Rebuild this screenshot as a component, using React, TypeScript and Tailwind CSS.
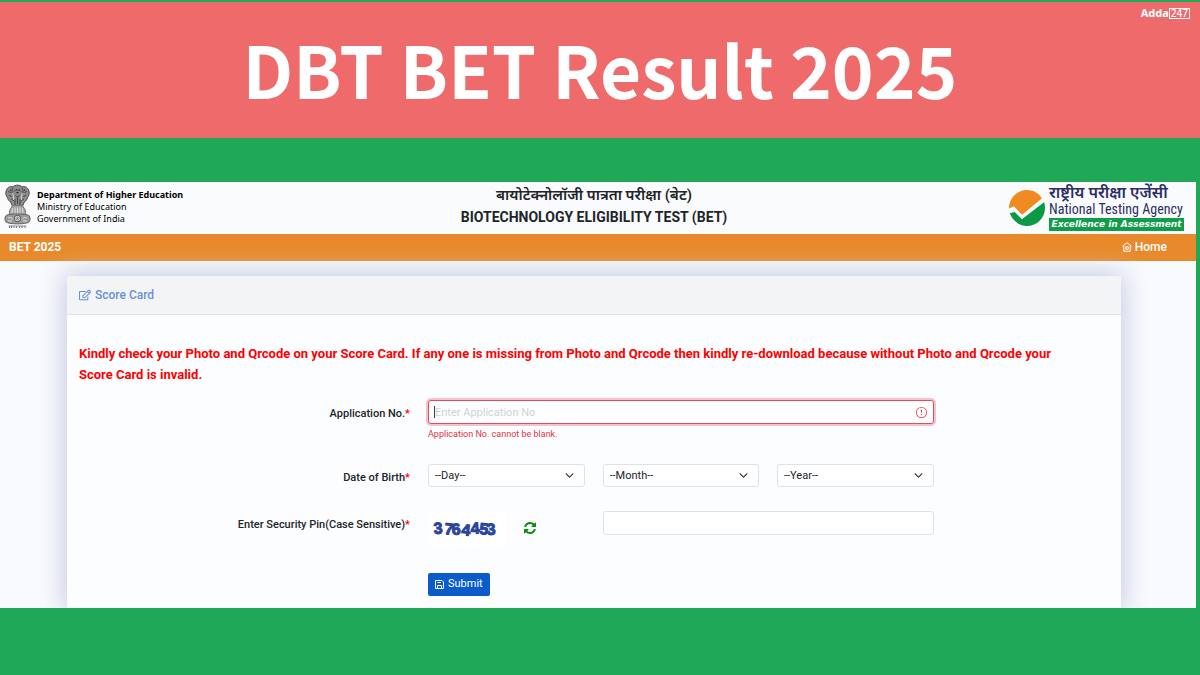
import React from 'react';
import { FaRegEdit } from 'react-icons/fa';
import { BsChevronDown, BsExclamationCircle } from 'react-icons/bs';

const Emblem: React.FC = () => (
  <svg viewBox="0 0 54 92" className="h-[46px] w-[27px] shrink-0" aria-label="Emblem of India">
    <path d="M5 12c2-6 8-8 13-6 4-5 14-5 18 0 5-2 11 0 13 6 3 6 1 11-2 15-1 5-4 8-7 10l-2 6H16l-2-6c-3-2-6-5-7-10C4 23 2 18 5 12z" fill="#8c8c8c" stroke="#4d4d4d" strokeWidth="2" />
    <path d="M18 8c-3 5-3 9 0 13M36 8c3 5 3 9 0 13M20 15c2-4 12-4 14 0M22 22c2 4 8 4 10 0M8 15l5 2M46 15l-5 2M10 23l5 2M44 23l-5 2M14 30l6 3M40 30l-6 3M27 26v14M22 30v12M32 30v12" stroke="#444" strokeWidth="2" fill="none" />
    <path d="M24 11h1M30 11h1M25 17h4M12 12h2M40 12h2" stroke="#222" strokeWidth="2.5" />
    <path d="M17 18c2 5 3 9 2 14M37 18c-2 5-3 9-2 14" stroke="#ddd" strokeWidth="2" fill="none" />
    <path d="M17 43h20l3 5c3 4 4 8 3 13H11c-1-5 0-9 3-13z" fill="#a3a3a3" stroke="#777" strokeWidth="2" />
    <path d="M17 48l-1 10M22 47v12M27 47v12M32 47v12M37 48l1 10" stroke="#e0e0e0" strokeWidth="2" />
    <path d="M4 63c6-4 40-4 46 0 3 4 3 9 0 13-6 5-40 5-46 0-3-4-3-9 0-13z" fill="#9a9a9a" stroke="#666" strokeWidth="2" />
    <circle cx="27" cy="69" r="6.500" fill="#ddd" stroke="#555" strokeWidth="2" />
    <path d="M27 63v12M21 69h12M23 65l8 8M31 65l-8 8" stroke="#777" />
    <path d="M8 68c4-2 8-1 10 3M46 68c-4-2-8-1-10 3M8 74h8M46 74h-8" stroke="#ddd" strokeWidth="2" fill="none" />
    <path d="M9 84h36" stroke="#666" strokeWidth="1.500" />
    <path d="M11 85v3M15 84v4M20 85v3M25 85v3M31 85v3M36 84v4M42 85v3" stroke="#666" strokeWidth="2" />
  </svg>
);

const NtaMark: React.FC = () => (
  <svg viewBox="0 0 36 36" className="h-9 w-9 shrink-0" aria-hidden="true">
    <path d="M0 18.500C0 8 8 0 18 0c7 0 12 3.500 15 8.500L13 25l-8-8.500z" fill="#f28a22" />
    <path d="M.5 22.500C3 30 10 36 18 36c10 0 18-8 18-18 0-2.500-.5-4.500-1-6L13 29 6 22z" fill="#0a9a45" />
    <path d="M0 19l5-2.500 8 8.500L33 8.500l2 3.500-22 17L6 22l-5.500 1z" fill="#fff" />
  </svg>
);

const HomeIcon: React.FC = () => (
  <svg viewBox="0 0 20 20" className="mb-0.5 h-[10px] w-[10px]" fill="none" stroke="currentColor" strokeWidth="2" aria-hidden="true">
    <path d="M1 8.500L10 1.500l9 7M3.500 8v10.500h13V8" />
    <path d="M7.500 9.500h5v5h-5z" />
  </svg>
);

const SaveIcon: React.FC = () => (
  <svg viewBox="0 0 18 18" className="h-[9px] w-[9px]" fill="none" stroke="currentColor" strokeWidth="2" aria-hidden="true">
    <path d="M1 1h13l3 3v13H1z" />
    <path d="M5 17v-6h8v6M5 5h7" />
  </svg>
);

const RefreshIcon: React.FC = () => (
  <svg viewBox="0 0 1536 1536" className="h-3 w-3" fill="currentColor" aria-hidden="true">
    <path d="M1511 928q0 5-1 7-64 268-268 434.500T764 1536q-146 0-282.500-55T238 1324l-129 129q-19 19-45 19t-45-19-19-45V960q0-26 19-45t45-19h448q26 0 45 19t19 45-19 45l-137 137q71 66 161 102t187 36q134 0 250-65t186-179q11-17 53-117 8-23 30-23h192q13 0 22.500 9.500t9.500 22.500zm25-800v448q0 26-19 45t-45 19h-448q-26 0-45-19t-19-45 19-45l138-138Q969 256 768 256q-134 0-250 65T332 500q-11 17-53 117-8 23-30 23H50q-13 0-22.500-9.500T18 608v-7q65-268 270-434.500T768 0q146 0 284 55.500T1297 212l130-129q19-19 45-19t45 19 19 45z" />
  </svg>
);

const Captcha: React.FC = () => (
  <svg viewBox="0 0 78 36" className="h-9 w-[78px] bg-white" role="img" aria-label="Security pin">
    <text
      x="6 16 24 33 43 51 59"
      y="23 23 24 24 23 23 24"
      rotate="-4 6 -4 6 -4 5 -4"
      className="fill-[#2b449c] stroke-[#2b449c] font-['Liberation_Sans'] text-[16px] font-bold"
    >
      3764453
    </text>
  </svg>
);

interface FieldLabelProps {
  htmlFor: string;
  children: React.ReactNode;
}

const FieldLabel: React.FC<FieldLabelProps> = ({ htmlFor, children }) => (
  <label htmlFor={htmlFor} className="col-span-4 px-[9px] pt-1.5 text-right text-[11px] leading-4 font-medium">
    {children}
    <span className="text-[#f00]">*</span>
  </label>
);

const DateSelect: React.FC<{ id: string; name: string }> = ({ id, name }) => (
  <div className="col-span-2 px-[9px]">
    <div className="relative">
      <select
        id={id}
        aria-label={name}
        className="block h-[23px] w-full appearance-none rounded-[3px] border border-[#dee2e6] bg-white px-1.5 text-[11px] leading-4"
      >
        <option>--{name}--</option>
      </select>
      <BsChevronDown className="pointer-events-none absolute top-[7px] right-[11px] h-[9px] w-[9px] stroke-1" />
    </div>
  </div>
);

const Header: React.FC = () => (
  <header>
    <div className="grid grid-cols-[1fr_auto_1fr] bg-[#fafbfd]">
      <div className="flex gap-1.5 px-1 pt-0.5 pb-1">
        <Emblem />
        <p className="pt-[5px] font-['Noto_Sans'] text-[9px] leading-[12px] text-black">
          <b>Department of Higher Education</b>
          <br />
          Ministry of Education
          <br />
          Government of India
        </p>
      </div>
      <div className="pt-0.5 pr-2 text-center leading-[22px]">
        <p lang="hi" className="text-[15px] font-semibold">बायोटेक्नोलॉजी पात्रता परीक्षा (बेट)</p>
        <p className="text-[14px] font-bold">BIOTECHNOLOGY ELIGIBILITY TEST (BET)</p>
      </div>
      <div className="flex items-center justify-end gap-1 pr-3">
        <NtaMark />
        <div className="w-[135px] whitespace-nowrap text-[#2b2f63]">
          <p lang="hi" className="text-[16px] leading-[15px] font-semibold">राष्ट्रीय परीक्षा एजेंसी</p>
          <p className="font-['Roboto_Condensed',Roboto] text-[14px] leading-[18px]">National Testing Agency</p>
          <p className="bg-[#0f9d4a] text-center font-['DejaVu_Sans'] text-[9px] leading-[13px] font-bold text-white italic">
            Excellence in Assessment
          </p>
        </div>
      </div>
    </div>
    <nav className="flex items-center justify-between bg-[#e88a2b] pr-[29px] pl-[9px] text-[12px] leading-[27px] font-bold text-white">
      <span>BET 2025</span>
      <a href="#" className="flex items-center gap-[3px] font-medium">
        <HomeIcon />
        Home
      </a>
    </nav>
  </header>
);

const ScoreCardForm: React.FC = () => (
  <form className="pr-1 pb-3 pl-[3px]">
    <p className="pt-7 pr-8 pb-[15px] pl-[9px] text-[13px] leading-[21px] font-bold text-[#f00]">
      Kindly check your Photo and Qrcode on your Score Card. If any one is missing from Photo and Qrcode then kindly
      re-download because without Photo and Qrcode your Score Card is invalid.
    </p>
    <div className="grid grid-cols-12">
      <FieldLabel htmlFor="application-no">Application No.</FieldLabel>
      <div className="col-span-6 px-[9px]">
        <div className="relative">
          <input
            id="application-no"
            type="text"
            placeholder="Enter Application No"
            className="block h-6 w-full rounded-[3px] border border-[#dc4c64] bg-white px-1.5 text-[11px] ring-2 ring-[#f6c3cb] outline-none placeholder:text-[#cfd1d4]"
          />
          <span className="absolute top-1.5 left-1.5 h-3 w-px bg-gray-700" />
          <BsExclamationCircle className="absolute top-[7px] right-[7px] h-[11px] w-[11px] text-[#dc3545]" />
        </div>
        <p className="pt-1 text-[9px] leading-[12px] text-[#dc3545]">Application No. cannot be blank.</p>
      </div>
    </div>
    <div className="grid grid-cols-12 pt-6">
      <FieldLabel htmlFor="day">Date of Birth</FieldLabel>
      <DateSelect id="day" name="Day" />
      <DateSelect id="month" name="Month" />
      <DateSelect id="year" name="Year" />
    </div>
    <div className="grid grid-cols-12 pt-6">
      <FieldLabel htmlFor="security-pin">Enter Security Pin(Case Sensitive)</FieldLabel>
      <div className="col-span-2 flex h-[62px] items-start gap-[18px] px-[9px]">
        <Captcha />
        <button type="button" aria-label="Refresh security pin" className="mt-[11px] text-[#0a8a0a]">
          <RefreshIcon />
        </button>
      </div>
      <div className="col-span-4 px-[9px]">
        <input
          id="security-pin"
          type="text"
          className="block h-6 w-full rounded-[3px] border border-[#dee2e6] bg-white px-1.5 text-[11px]"
        />
      </div>
    </div>
    <div className="grid grid-cols-12">
      <div className="col-span-6 col-start-5 px-[9px]">
        <button
          type="submit"
          className="flex h-[23px] items-center gap-1 rounded-[2px] bg-[#0b5bcb] px-[7px] text-[11px] text-white"
        >
          <SaveIcon />
          Submit
        </button>
      </div>
    </div>
  </form>
);

const App: React.FC = () => {
  return (
    <div className="min-h-screen bg-[#1fa856] pt-0.5 font-[Roboto,'Noto_Sans',sans-serif] text-[#212529]">
      <div className="relative bg-[#ef6b6b] pt-6 pb-7">
        <h1 className="text-center font-['Noto_Sans_CJK_SC','Noto_Sans',sans-serif] text-[71px] leading-[84px] font-bold text-white">
          DBT BET Result 2025
        </h1>
        <div className="absolute top-1 right-2.5 flex items-center font-['Noto_Sans'] text-[11px] leading-[14px] font-bold text-white">
          Adda
          <span className="border border-white px-px text-[10px] leading-[9px] font-medium">247</span>
        </div>
      </div>
      <main className="mt-11 mr-1 overflow-hidden bg-[#f9fafe]">
        <Header />
        <div className="pt-[15px] pr-[75px] pl-[67px]">
          <section className="rounded-t-[3px] bg-[#fcfdfe] shadow-[0_0_24px_4px_#c9cee4]">
            <h2 className="flex items-center gap-1 rounded-t-[3px] border-b border-[#dfe1e4] bg-[#f3f4f6] px-3 text-[12px] leading-[38px] font-medium text-[#6a8fdf]">
              <FaRegEdit className="h-3 w-3" />
              Score Card
            </h2>
            <ScoreCardForm />
          </section>
        </div>
      </main>
    </div>
  );
};

export default App;
